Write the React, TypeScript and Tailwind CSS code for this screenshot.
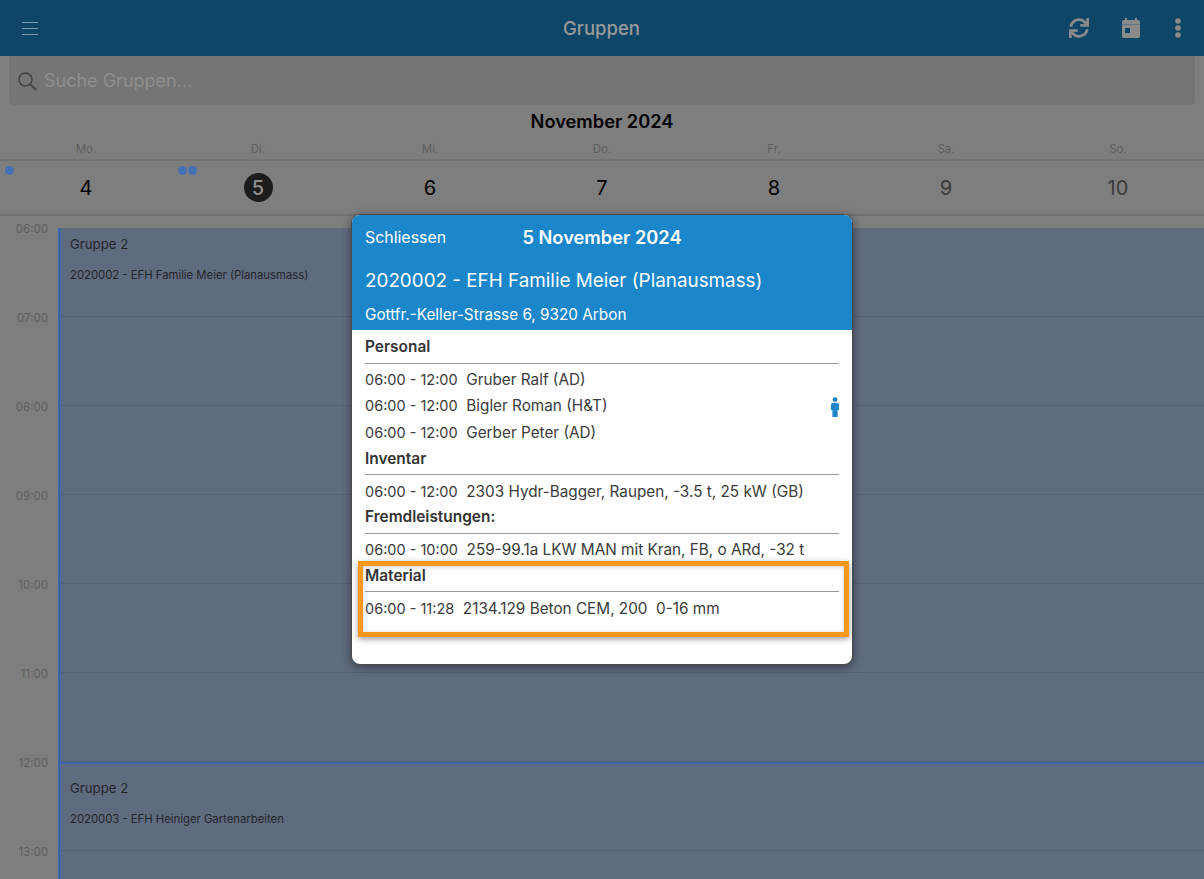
import { FaSync } from "react-icons/fa";

const font = { fontFamily: "Inter, 'Liberation Sans', sans-serif" };

const days = [
  { label: "Mo.", num: "4" },
  { label: "Di.", num: "5", active: true },
  { label: "Mi.", num: "6" },
  { label: "Do.", num: "7" },
  { label: "Fr.", num: "8" },
  { label: "Sa.", num: "9", muted: true },
  { label: "So.", num: "10", muted: true },
];

const hours = ["06:00", "07:00", "08:00", "09:00", "10:00", "11:00", "12:00", "13:00"];

function TopBar() {
  return (
    <div className="grid h-[56px] grid-cols-3 items-center bg-[#0e4667] pl-[22px] pr-[23px]">
      <div className="flex w-[16px] flex-col gap-[5px]">
        <div className="h-px bg-[#7f97a8]" />
        <div className="h-px bg-[#7f97a8]" />
        <div className="h-px bg-[#7f97a8]" />
      </div>
      <div className="pt-[1px] text-center text-[18.5px] font-medium text-[#9a9a9a]">Gruppen</div>
      <div className="flex items-center justify-end text-[#8a8a8a]">
        <FaSync size={20} />
        <svg className="ml-[33px]" width="18" height="20" viewBox="0 0 18 20" fill="currentColor">
          <rect x="3" y="0" width="2" height="4" />
          <rect x="13" y="0" width="2" height="4" />
          <path d="M2 2h14a2 2 0 0 1 2 2v14a2 2 0 0 1-2 2H2a2 2 0 0 1-2-2V4a2 2 0 0 1 2-2z" />
          <rect x="0" y="6" width="18" height="1" fill="#0e4667" opacity="0.35" />
          <rect x="3" y="10" width="5" height="5" fill="#0e4667" />
        </svg>
        <svg className="ml-[35px]" width="6" height="20" viewBox="0 0 6 20" fill="currentColor">
          <circle cx="3" cy="3" r="2.8" />
          <circle cx="3" cy="10" r="2.8" />
          <circle cx="3" cy="17" r="2.8" />
        </svg>
      </div>
    </div>
  );
}

function SearchBar() {
  return (
    <div className="px-[9px]">
      <div className="flex h-[49px] items-center gap-[7px] rounded-b-[5px] bg-[#757575] pl-[8px]">
        <svg width="20" height="20" viewBox="0 0 20 20" fill="none" stroke="#444" strokeWidth="1.5">
          <circle cx="8.5" cy="8.5" r="6.5" />
          <path d="M13.5 13.5 19 19" strokeWidth="2" />
        </svg>
        <span className="text-[18px] text-[#8e8e8e]">Suche Gruppen...</span>
      </div>
    </div>
  );
}

function WeekHeader() {
  return (
    <div>
      <div className="flex h-[33px] items-center justify-center text-[18.25px] font-semibold text-black">
        November 2024
      </div>
      <div className="grid h-[23px] grid-cols-7 border-b-2 border-[#727272]">
        {days.map((d) => (
          <div key={d.label} className="pt-[3px] text-center text-[11.5px] leading-[16px] text-[#5e5e5e]">
            {d.label}
          </div>
        ))}
      </div>
      <div className="grid h-[55px] grid-cols-7 border-b-2 border-[#727272]">
        {days.map((d) => (
          <div key={d.num} className="flex items-center justify-center">
            {d.active ? (
              <div className="flex h-[29px] w-[29px] items-center justify-center rounded-full bg-[#1c1c1c] text-[20px] font-medium text-[#8f8f8f]">
                {d.num}
              </div>
            ) : (
              <span className={`text-[20px] ${d.muted ? "text-[#3a3a3a]" : "text-black"}`}>{d.num}</span>
            )}
          </div>
        ))}
      </div>
    </div>
  );
}

function EventBlock({ title, sub, count, top }: { title: string; sub: string; count: number; top: string }) {
  return (
    <div className="relative border-l-[3px] border-[#3f66a8] bg-[#5f6b7e]">
      <div className={`absolute left-[9px] text-[#23262b] ${top}`}>
        <div className="text-[13.2px] leading-[18px]">{title}</div>
        <div className="mt-[15px] text-[11.3px] leading-[14px]">{sub}</div>
      </div>
      {Array.from({ length: count }).map((_, i) => (
        <div key={i} className="h-[89px] border-b border-[#566173]" />
      ))}
    </div>
  );
}

function Row({ time, end, text, icon }: { time: string; end: string; text: string; icon?: boolean }) {
  return (
    <div className="flex h-[26.3px] items-center justify-between text-[#3b3b3b]">
      <span className="whitespace-pre text-[15.3px]">
        <span className="text-[14.5px]">
          {time} - {end}
        </span>
        {"  "}
        {text}
      </span>
      {icon && (
        <svg width="8" height="20" viewBox="0 0 8 20" fill="#1c86cb">
          <circle cx="4" cy="2.6" r="2.4" />
          <path d="M1.5 6h5A1.5 1.5 0 0 1 8 7.5V13H6.6v7H1.4v-7H0V7.5A1.5 1.5 0 0 1 1.5 6z" />
        </svg>
      )}
    </div>
  );
}

function Section({ title, children }: { title: string; children: React.ReactNode }) {
  return (
    <div>
      <div className="flex h-[28.5px] items-center border-b border-[#9a9a9a] pb-[4px] text-[15.45px] font-semibold text-[#333]">
        {title}
      </div>
      <div className="pt-[4px]">{children}</div>
    </div>
  );
}

function Modal() {
  return (
    <div className="absolute left-[351px] top-[214px] h-[451px] w-[502px] overflow-hidden rounded-[9px] border border-[#4a4a4a] bg-white shadow-[0_2px_10px_rgba(0,0,0,0.45)]">
      <div className="h-[115px] bg-[#1c86cb] px-[13px] text-white">
        <div className="relative flex h-[46px] items-center text-[15.9px]">
          Schliessen
          <span className="absolute left-0 right-0 text-center text-[18.3px] font-semibold">5 November 2024</span>
        </div>
        <div className="mt-[2px] text-[18.85px] leading-[36px]">2020002 - EFH Familie Meier (Planausmass)</div>
        <div className="mt-[4px] text-[15.3px] leading-[24px]">Gottfr.-Keller-Strasse 6, 9320 Arbon</div>
      </div>
      <div className="px-[13px] pt-[5px]">
        <Section title="Personal">
          <Row time="06:00" end="12:00" text="Gruber Ralf (AD)" />
          <Row time="06:00" end="12:00" text="Bigler Roman (H&T)" icon />
          <Row time="06:00" end="12:00" text="Gerber Peter (AD)" />
        </Section>
        <Section title="Inventar">
          <Row time="06:00" end="12:00" text="2303 Hydr-Bagger, Raupen, -3.5 t, 25 kW (GB)" />
        </Section>
        <Section title="Fremdleistungen:">
          <Row time="06:00" end="10:00" text="259-99.1a LKW MAN mit Kran, FB, o ARd, -32 t" />
        </Section>
        <Section title="Material">
          <Row time="06:00" end="11:28" text="2134.129 Beton CEM, 200  0-16 mm" />
        </Section>
      </div>
    </div>
  );
}

export default function App() {
  return (
    <div className="relative h-[879px] w-[1204px] overflow-hidden bg-[#7e7e7e]" style={font}>
      <TopBar />
      <SearchBar />
      <WeekHeader />
      <div className="flex pt-[12px]">
        <div className="-mt-[4px] w-[58px] shrink-0">
          {hours.map((h) => (
            <div key={h} className="h-[89px] pr-[10px] text-right text-[11.5px] leading-none text-[#5e5e5e]">
              {h}
            </div>
          ))}
        </div>
        <div className="relative flex-1">
          <EventBlock title="Gruppe 2" sub="2020002 - EFH Familie Meier (Planausmass)" count={6} top="top-[7px]" />
          <div className="relative z-10 -mb-[2px] h-[2px] bg-[#3f66a8]" />
          <EventBlock title="Gruppe 2" sub="2020003 - EFH Heiniger Gartenarbeiten" count={2} top="top-[17px]" />
        </div>
      </div>
      {/* Punkte der Termine */}
      <div className="absolute left-[5px] top-[166px] h-[9px] w-[9px] rounded-full bg-[#446fb3]" />
      <div className="absolute left-[178px] top-[166px] flex gap-px">
        <div className="h-[9px] w-[9px] rounded-full bg-[#446fb3]" />
        <div className="h-[9px] w-[9px] rounded-full bg-[#446fb3]" />
      </div>
      <Modal />
      {/* Markierung */}
      <div className="absolute left-[358px] top-[561px] h-[76px] w-[491px] border-[5px] border-[#f7981d] shadow-[0_2px_6px_rgba(0,0,0,0.4),inset_0_1px_4px_rgba(0,0,0,0.2)]" />
    </div>
  );
}
